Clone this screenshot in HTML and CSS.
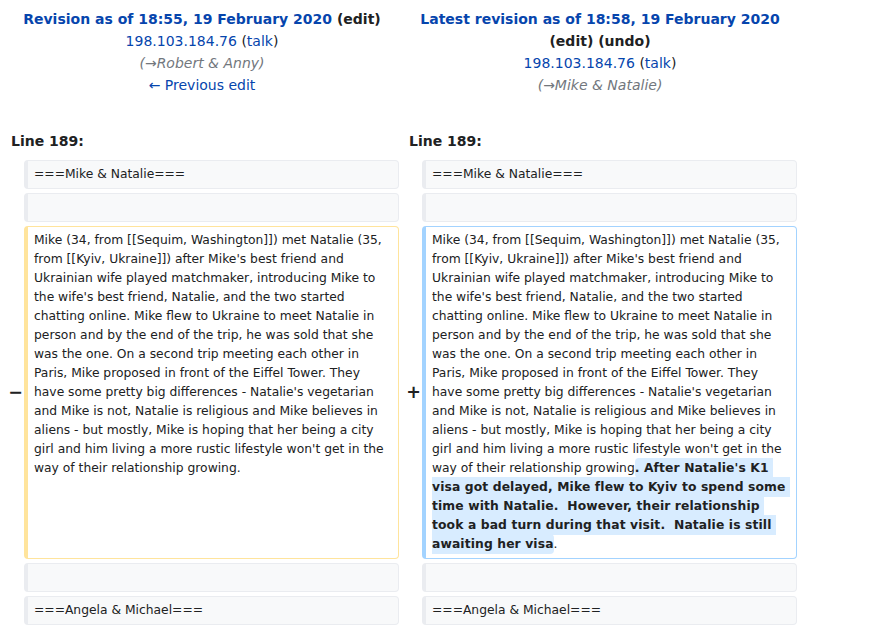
FILE: index.html
```html
<!DOCTYPE html>
<html lang="en">
<head>
<meta charset="utf-8">
<title>Difference between revisions</title>
<link rel="stylesheet" href="styles.css">
</head>
<body>
<div class="diff">
  <div class="title">
    <div class="title-main"><a href="#">Revision as of 18:55, 19 February 2020</a> <span class="paren">(<a href="#" class="dark">edit</a>)</span></div>
    <div><a href="#">198.103.184.76</a> <span class="paren">(<a href="#">talk</a>)</span></div>
    <div class="summary">(<a href="#" class="gray">→</a>Robert &amp; Anny)</div>
    <div><a href="#">← Previous edit</a></div>
  </div>
  <div class="title">
    <div class="title-main"><a href="#">Latest revision as of 18:58, 19 February 2020</a> <span class="paren">(<a href="#" class="dark">edit</a>)</span> <span class="paren">(<a href="#" class="dark">undo</a>)</span></div>
    <div><a href="#">198.103.184.76</a> <span class="paren">(<a href="#">talk</a>)</span></div>
    <div class="summary">(<a href="#" class="gray">→</a>Mike &amp; Natalie)</div>
  </div>

  <div class="lineno">Line 189:</div>
  <div class="lineno">Line 189:</div>

  <div class="marker"></div>
  <div class="cell context"><div class="ln">===Mike &amp; Natalie===</div></div>
  <div class="marker"></div>
  <div class="cell context"><div class="ln">===Mike &amp; Natalie===</div></div>

  <div class="marker"></div>
  <div class="cell context"><div class="ln"></div></div>
  <div class="marker"></div>
  <div class="cell context"><div class="ln"></div></div>

  <div class="marker">−</div>
  <div class="cell deleted"><div class="ln">Mike (34, from [[Sequim, Washington]]) met Natalie (35, from [[Kyiv, Ukraine]]) after Mike's best friend and Ukrainian wife played matchmaker, introducing Mike to the wife's best friend, Natalie, and the two started chatting online. Mike flew to Ukraine to meet Natalie in person and by the end of the trip, he was sold that she was the one. On a second trip meeting each other in Paris, Mike proposed in front of the Eiffel Tower. They have some pretty big differences - Natalie's vegetarian and Mike is not, Natalie is religious and Mike believes in aliens - but mostly, Mike is hoping that her being a city girl and him living a more rustic lifestyle won't get in the way of their relationship growing.</div></div>
  <div class="marker">+</div>
  <div class="cell added"><div class="ln">Mike (34, from [[Sequim, Washington]]) met Natalie (35, from [[Kyiv, Ukraine]]) after Mike's best friend and Ukrainian wife played matchmaker, introducing Mike to the wife's best friend, Natalie, and the two started chatting online. Mike flew to Ukraine to meet Natalie in person and by the end of the trip, he was sold that she was the one. On a second trip meeting each other in Paris, Mike proposed in front of the Eiffel Tower. They have some pretty big differences - Natalie's vegetarian and Mike is not, Natalie is religious and Mike believes in aliens - but mostly, Mike is hoping that her being a city girl and him living a more rustic lifestyle won't get in the way of their relationship growing<ins class="change">. After Natalie's K1 visa got delayed, Mike flew to Kyiv to spend some time with Natalie.  However, their relationship took a bad turn during that visit.  Natalie is still awaiting her visa</ins>.</div></div>

  <div class="marker"></div>
  <div class="cell context"><div class="ln"></div></div>
  <div class="marker"></div>
  <div class="cell context"><div class="ln"></div></div>

  <div class="marker"></div>
  <div class="cell context"><div class="ln">===Angela &amp; Michael===</div></div>
  <div class="marker"></div>
  <div class="cell context"><div class="ln">===Angela &amp; Michael===</div></div>
</div>
</body>
</html>
```

FILE: styles.css
```css
html, body {
  margin: 0;
  padding: 0;
  background: #ffffff;
}

body {
  font-family: "DejaVu Sans", sans-serif;
  font-size: 14px;
  color: #202122;
}

a {
  color: #0645ad;
  text-decoration: none;
}

a.dark {
  color: #202122;
}

a.gray {
  color: #72777d;
}

.diff {
  display: grid;
  grid-template-columns: 15px 375px 15px 375px;
  column-gap: 4px;
  row-gap: 4px;
  padding: 8px 0 0 5px;
  width: 792px;
}

.title {
  grid-column: span 2;
  text-align: center;
  line-height: 22px;
  padding: 0 7px;
}

.title-main {
  font-weight: bold;
}

.paren {
  color: #202122;
}

.summary {
  font-style: italic;
  color: #72777d;
}

.lineno {
  grid-column: span 2;
  font-weight: bold;
  line-height: 22px;
  padding: 30px 0 4px 6px;
}

.marker {
  font-weight: bold;
  font-size: 17.5px;
  text-align: right;
  align-self: center;
  margin-right: -3px;
  line-height: 1.2;
}

.cell {
  font-size: 12.32px;
  line-height: 19px;
  border-style: solid;
  border-width: 1px 1px 1px 4px;
  border-radius: 4px;
  padding: 4px 6px;
  white-space: pre-wrap;
  overflow-wrap: break-word;
}

.ln {
  min-height: 19px;
}

.context {
  background: #f8f9fa;
  border-color: #eaecf0;
}

.deleted {
  background: #ffffff;
  border-color: #ffe49c;
}

.added {
  background: #ffffff;
  border-color: #a3d3ff;
}

.change {
  text-decoration: none;
  font-weight: bold;
  letter-spacing: 0.12px;
  background: #d8ecff;
  border-radius: 4px;
  padding: 3px 0;
}
```
